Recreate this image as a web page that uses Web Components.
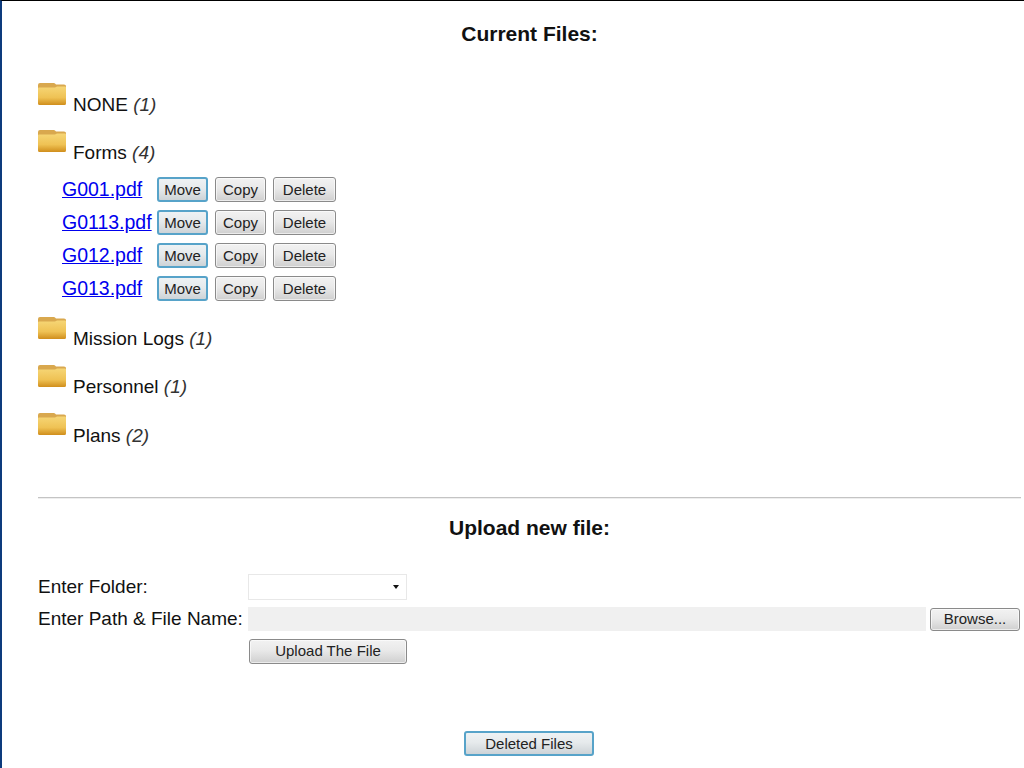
<!DOCTYPE html>
<html>
<head>
<meta charset="utf-8">
<style>
  html, body { margin: 0; padding: 0; height: 768px; overflow: hidden; background: #fff; }
  body { font-family: "Liberation Sans", Arial, sans-serif; color: #111; }
</style>
</head>
<body>
<file-page>
  <section-title>Current Files:</section-title>
  <folder-row name="NONE" count="1" style="margin-bottom:18px"></folder-row>
  <folder-row name="Forms" count="4" style="--label-top:12px">
    <file-row name="G001.pdf"></file-row>
    <file-row name="G0113.pdf"></file-row>
    <file-row name="G012.pdf"></file-row>
    <file-row name="G013.pdf"></file-row>
  </folder-row>
  <folder-row name="Mission Logs" count="1"></folder-row>
  <folder-row name="Personnel" count="1"></folder-row>
  <folder-row name="Plans" count="2" style="--label-top:12px"></folder-row>
  <upload-form></upload-form>
</file-page>

<script>
  // Botón común: "active" le da el borde azul
  class UiButton extends HTMLElement {
    constructor() {
      super();
      this.attachShadow({ mode: 'open' });
      this.shadowRoot.innerHTML = `
        <style>
          :host { display: inline-block; }
          button {
            display: block;
            width: 100%;
            height: 100%;
            box-sizing: border-box;
            margin: 0;
            padding: 0 0 1px;
            font: 15px "Liberation Sans", Arial, sans-serif;
            color: #222;
            border: 1px solid #8a8a8a;
            border-radius: 3px;
            background: linear-gradient(#f2f2f2, #e9e9e9 45%, #cfcfcf);
            box-shadow: inset 0 0 0 1px rgba(255,255,255,0.6);
          }
          :host([active]) button {
            border: 2px solid #57a3c9;
            box-shadow: none;
            background: linear-gradient(#eef2f4, #e6eaec 45%, #cdd3d7);
          }
        </style>
        <button type="button"><slot></slot></button>
      `;
    }
  }
  customElements.define('ui-button', UiButton);

  class SectionTitle extends HTMLElement {
    constructor() {
      super();
      this.attachShadow({ mode: 'open' });
      this.shadowRoot.innerHTML = `
        <style>
          :host {
            display: block;
            text-align: center;
            font-weight: bold;
            font-size: 21px;
            line-height: 24px;
            color: #111;
          }
        </style>
        <slot></slot>
      `;
    }
  }
  customElements.define('section-title', SectionTitle);

  class FolderRow extends HTMLElement {
    constructor() {
      super();
      this.attachShadow({ mode: 'open' });
    }

    connectedCallback() {
      this.shadowRoot.innerHTML = `
        <style>
          :host { display: block; margin-bottom: 19px; }
          .head {
            display: flex;
            align-items: flex-start;
            height: 29px;
            font-size: 19px;
          }
          svg { display: block; flex: none; width: 28px; height: 22px; margin-right: 7px; }
          .label { margin-top: var(--label-top, 11px); line-height: 22px; white-space: pre; }
          i { color: #333; }
          .files { display: flex; flex-direction: column; padding: 14px 0 0 24px; margin-bottom: -7px; }
        </style>
        <div class="head">
          <svg viewBox="0 0 28 22">
            <defs>
              <linearGradient id="f" x1="0" y1="0" x2="0" y2="1">
                <stop offset="0" stop-color="#f6d676"/>
                <stop offset="0.6" stop-color="#efc254"/>
                <stop offset="1" stop-color="#d08e1c"/>
              </linearGradient>
            </defs>
            <path d="M0 2 Q0 0 2 0 H16 Q17 0 18 1.5 H26 Q28 1.5 28 3 V8 H0 Z" fill="#d9a84e"/>
            <path d="M0 5.5 Q0 4.5 1 4.5 H17 L19 3.5 H27 Q28 3.5 28 4.5 V20.5 Q28 22 26.5 22 H1.5 Q0 22 0 20.5 Z" fill="url(#f)"/>
          </svg>
          <span class="label">${this.getAttribute('name')} <i>(${this.getAttribute('count')})</i></span>
        </div>
        ${this.children.length ? '<div class="files"><slot></slot></div>' : ''}
      `;
    }
  }
  customElements.define('folder-row', FolderRow);

  class FileRow extends HTMLElement {
    constructor() {
      super();
      this.attachShadow({ mode: 'open' });
    }

    connectedCallback() {
      this.shadowRoot.innerHTML = `
        <style>
          :host {
            display: flex;
            align-items: center;
            height: 33px;
            font-size: 19.5px;
          }
          a { width: 95px; flex: none; color: #0000ee; text-decoration: underline; white-space: nowrap; }
          ui-button { height: 25px; }
          .move { width: 51px; margin-right: 7px; }
          .copy { width: 51px; margin-right: 7px; }
          .del { width: 63px; }
        </style>
        <a href="#">${this.getAttribute('name')}</a>
        <ui-button class="move" active>Move</ui-button>
        <ui-button class="copy">Copy</ui-button>
        <ui-button class="del">Delete</ui-button>
      `;
    }
  }
  customElements.define('file-row', FileRow);

  class UploadForm extends HTMLElement {
    constructor() {
      super();
      this.attachShadow({ mode: 'open' });
      this.shadowRoot.innerHTML = `
        <style>
          :host { display: block; font-size: 19px; }
          hr { border: 0; border-top: 1px solid #c4c4c4; border-bottom: 1px solid #eee; height: 0; margin: 0 0 17px; }
          .grid {
            display: grid;
            grid-template-columns: 210px 1fr;
            grid-auto-rows: 32px;
            align-items: center;
            margin-top: 31px;
          }
          .select {
            display: flex;
            align-items: center;
            justify-content: flex-end;
            box-sizing: border-box;
            width: 159px;
            height: 26px;
            padding-right: 7px;
            background: #fff;
            border: 1px solid #e8e8e8;
          }
          .select::after {
            content: '';
            border: 3.5px solid transparent;
            border-top: 4px solid #111;
            border-bottom: 0;
          }
          .file { display: flex; align-items: center; gap: 4px; margin-right: 1px; }
          .path { flex: 1; height: 24px; background: #f0f0f0; }
          .browse { width: 90px; height: 23px; }
          .upload { width: 158px; height: 25px; margin-left: 1px; }
          .foot { display: flex; justify-content: center; margin-top: 64px; }
          .deleted { width: 130px; height: 25px; margin-right: 1px; }
        </style>
        <hr>
        <section-title>Upload new file:</section-title>
        <div class="grid">
          <span>Enter Folder:</span>
          <div class="select"></div>
          <span>Enter Path &amp; File Name:</span>
          <div class="file"><div class="path"></div><ui-button class="browse">Browse...</ui-button></div>
          <span></span>
          <ui-button class="upload">Upload The File</ui-button>
        </div>
        <div class="foot"><ui-button class="deleted" active>Deleted Files</ui-button></div>
      `;
    }
  }
  customElements.define('upload-form', UploadForm);

  class FilePage extends HTMLElement {
    constructor() {
      super();
      this.attachShadow({ mode: 'open' });
      this.shadowRoot.innerHTML = `
        <style>
          :host {
            display: block;
            box-sizing: border-box;
            height: 768px;
            border-top: 1px solid #000;
            border-left: 2px solid #0d3b7d;
            padding: 21px 3px 0 36px;
          }
          ::slotted(section-title) { margin-bottom: 37px; }
          ::slotted(upload-form) { margin-top: 55px; }
        </style>
        <slot></slot>
      `;
    }
  }
  customElements.define('file-page', FilePage);
</script>
</body>
</html>
